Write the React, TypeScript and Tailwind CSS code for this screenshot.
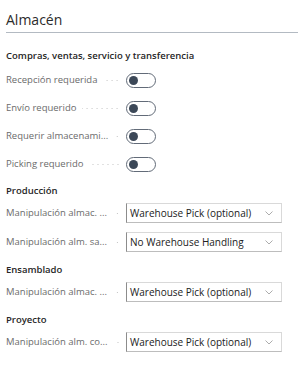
import React from "react";

function Label({ text }: { text: string }) {
  return (
    <div className="flex w-[114px] shrink-0 items-center overflow-hidden whitespace-nowrap">
      <span className="shrink-0 text-[#6b6b6b]">{text}</span>
      <div className="ml-[6px] h-[3px] min-w-0 flex-1 bg-[radial-gradient(circle,#c4c4c4_0.6px,transparent_1px)] bg-[length:5px_3px] bg-right bg-repeat-x" />
    </div>
  );
}

function ToggleRow({ text }: { text: string }) {
  return (
    <div className="flex h-[28px] items-center">
      <Label text={text} />
      <div className="ml-[6px] flex h-[15px] w-[30px] items-center rounded-full border border-[#626b78] bg-white pl-[2px]">
        <div className="h-[9px] w-[9px] rounded-full bg-[#3c4858]" />
      </div>
    </div>
  );
}

function SelectRow({ text, value }: { text: string; value: string }) {
  return (
    <div className="flex h-[20px] items-center">
      <Label text={text} />
      <div className="ml-[6px] flex h-[20px] w-[156px] items-center justify-between border border-[#d9d9d9] border-l-[#8c8c8c] border-b-[#bdbdbd] bg-white pl-[3px] pr-[8px]">
        <span className="text-[10px] text-[#212121]">{value}</span>
        <svg width="8" height="5" viewBox="0 0 8 5" fill="none">
          <path d="M0.5 0.5 L4 4 L7.5 0.5" stroke="#a3a3a3" strokeWidth="0.9" />
        </svg>
      </div>
    </div>
  );
}

function Heading({ text, className = "" }: { text: string; className?: string }) {
  return (
    <div className={"flex h-[19px] items-center text-[9.5px] font-semibold text-[#262626] " + className}>
      {text}
    </div>
  );
}

export default function App() {
  return (
    <div
      className="h-[373px] w-[298px] overflow-hidden bg-white pl-[6px] text-[9.5px]"
      style={{ fontFamily: '"Open Sans", "Noto Sans", sans-serif' }}
    >
      <div className="flex h-[33px] items-end border-b border-[#b3bac2] pb-[2px]">
        <span className="text-[14px] leading-[20px] text-[#2b2b2b]">Almacén</span>
      </div>

      <Heading text="Compras, ventas, servicio y transferencia" className="mt-[14px]" />
      <ToggleRow text="Recepción requerida" />
      <ToggleRow text="Envío requerido" />
      <ToggleRow text="Requerir almacenami..." />
      <ToggleRow text="Picking requerido" />

      <Heading text="Producción" className="mt-[4px]" />
      <div className="mt-[2px] flex flex-col gap-[9px]">
        <SelectRow text="Manipulación almac. ..." value="Warehouse Pick (optional)" />
        <SelectRow text="Manipulación alm. sa..." value="No Warehouse Handling" />
      </div>

      <Heading text="Ensamblado" className="mt-[9px]" />
      <div className="mt-[2px]">
        <SelectRow text="Manipulación almac. ..." value="Warehouse Pick (optional)" />
      </div>

      <Heading text="Proyecto" className="mt-[9px]" />
      <div className="mt-[2px]">
        <SelectRow text="Manipulación alm. co..." value="Warehouse Pick (optional)" />
      </div>
    </div>
  );
}
